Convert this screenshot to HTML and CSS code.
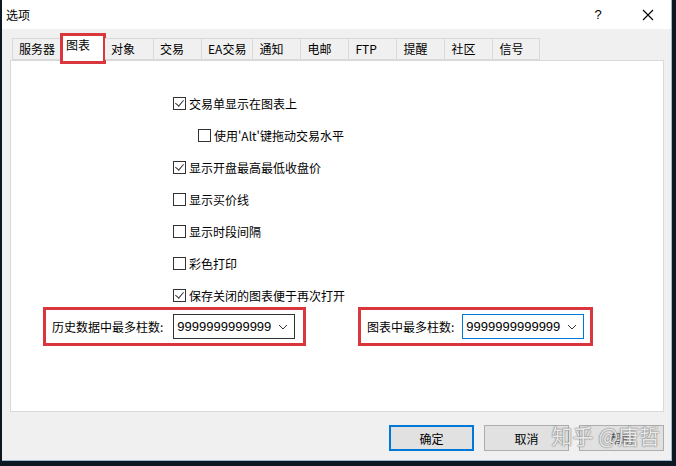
FILE: index.html
```html
<!DOCTYPE html>
<html lang="zh-CN">
<head>
  <meta charset="UTF-8">
  <title>选项</title>
  <link rel="stylesheet" href="styles.css">
</head>
<body>

  <div class="dialog">
    <div class="titlebar">
      <span class="title">选项</span>
      <span class="help">?</span>
      <span class="close">
        <svg width="12" height="12" viewBox="0 0 12 12"><path d="M1 1L11 11M11 1L1 11" stroke="#000" stroke-width="1.1"/></svg>
      </span>
    </div>

    <div class="content">
      <div class="tabs">
        <div class="tab">服务器</div>
        <div class="tab active">图表</div>
        <div class="tab">对象</div>
        <div class="tab">交易</div>
        <div class="tab">EA交易</div>
        <div class="tab">通知</div>
        <div class="tab">电邮</div>
        <div class="tab">FTP</div>
        <div class="tab">提醒</div>
        <div class="tab">社区</div>
        <div class="tab">信号</div>
      </div>

      <div class="panel">
        <div class="options">
          <label class="option"><span class="box checked"></span>交易单显示在图表上</label>
          <label class="option sub"><span class="box"></span>使用'Alt'键拖动交易水平</label>
          <label class="option"><span class="box checked"></span>显示开盘最高最低收盘价</label>
          <label class="option"><span class="box"></span>显示买价线</label>
          <label class="option"><span class="box"></span>显示时段间隔</label>
          <label class="option"><span class="box"></span>彩色打印</label>
          <label class="option"><span class="box checked"></span>保存关闭的图表便于再次打开</label>
        </div>

        <div class="limits">
          <div class="field field-history">
            <span class="field-label">历史数据中最多柱数:</span>
            <div class="combo">
              <span>9999999999999</span>
              <svg width="10" height="6" viewBox="0 0 10 6"><path d="M1 1L5 5L9 1" fill="none" stroke="#333" stroke-width="1"/></svg>
            </div>
          </div>
          <div class="field field-chart">
            <span class="field-label">图表中最多柱数:</span>
            <div class="combo focused">
              <span>9999999999999</span>
              <svg width="10" height="6" viewBox="0 0 10 6"><path d="M1 1L5 5L9 1" fill="none" stroke="#333" stroke-width="1"/></svg>
            </div>
          </div>
        </div>
      </div>

      <div class="buttons">
        <button class="btn default">确定</button>
        <button class="btn">取消</button>
        <button class="btn help-btn">帮助</button>
        <span class="watermark">知乎 @唐哲</span>
      </div>
    </div>
  </div>

</body>
</html>
```

FILE: styles.css
```css
body {
  margin: 0;
  background-color: #0d1822;
  font-family: "Noto Sans CJK SC", "Liberation Sans", sans-serif;
  font-size: 12px;
  color: #000;
  height: 466px;
  overflow: hidden;
}

.dialog {
  margin-left: 2px;
  width: 670px;
  height: 461px;
  background-color: #f0f0f0;
  border-right: 1px solid #9fb8cf;
  border-bottom: 1px solid #9fb8cf;
  box-sizing: border-box;
  display: flex;
  flex-direction: column;
}

.titlebar {
  height: 29px;
  background-color: #fff;
  display: flex;
  align-items: center;
  padding-left: 4px;
  flex-shrink: 0;
}

.title {
  font-size: 12px;
  flex: 1;
}

.help {
  font-family: "Liberation Sans", sans-serif;
  font-size: 13px;
  width: 46px;
  text-align: center;
}

.close {
  width: 46px;
  display: flex;
  justify-content: center;
  padding-left: 4px;
}

.content {
  padding: 9px 7px 0 8px;
  display: flex;
  flex-direction: column;
  position: relative;
}

.tabs {
  display: flex;
  height: 22px;
  padding-left: 2px;
  align-items: flex-end;
  position: relative;
  z-index: 1;
}

.tab {
  min-width: 48px;
  height: 22px;
  box-sizing: border-box;
  padding: 0 6px;
  border: 1px solid #d9d9d9;
  border-right: none;
  background-color: #f0f0f0;
  line-height: 20px;
  white-space: nowrap;
}

.tab:last-child {
  border-right: 1px solid #d9d9d9;
}

.tab.active {
  min-width: 40px;
  width: 40px;
  height: 25px;
  margin: 0 2px -1px 2px;
  background-color: #fff;
  border: none;
  padding-left: 3px;
  line-height: 18px;
  outline: 3px solid #d9363e;
}

.tab.active + .tab {
  border-left: none;
}

.panel {
  height: 352px;
  background-color: #fff;
  border: 1px solid #d9d9d9;
  box-sizing: border-box;
  display: flex;
  flex-direction: column;
}

.options {
  padding: 26px 0 0 162px;
  display: flex;
  flex-direction: column;
}

.option {
  height: 32px;
  display: flex;
  align-items: center;
  gap: 3px;
}

.option.sub {
  padding-left: 25px;
}

.box {
  width: 13px;
  height: 13px;
  border: 1px solid #333;
  box-sizing: border-box;
  background-color: #fff;
  position: relative;
}

.box.checked::after {
  content: "";
  position: absolute;
  left: 3px;
  top: 0;
  width: 4px;
  height: 7px;
  border-right: 1px solid #333;
  border-bottom: 1px solid #333;
  transform: rotate(40deg);
}

.limits {
  display: flex;
  margin-top: -4px;
  padding-left: 32px;
  gap: 52px;
}

.field {
  display: flex;
  align-items: center;
  height: 39px;
  box-sizing: border-box;
  border: 3px solid #d9363e;
  padding-left: 6px;
}

.field-history {
  width: 263px;
  gap: 10px;
}

.field-chart {
  width: 235px;
  gap: 8px;
}

.field-label {
  white-space: nowrap;
}

.combo {
  width: 122px;
  height: 25px;
  box-sizing: border-box;
  border: 1px solid #333;
  background-color: #fff;
  display: flex;
  align-items: center;
  justify-content: space-between;
  padding: 0 6px 0 3px;
  font-family: "Liberation Sans", sans-serif;
  font-size: 13px;
}

.combo.focused {
  border-color: #0078d7;
}

.buttons {
  display: flex;
  justify-content: flex-end;
  gap: 10px;
  padding: 13px 0 0 0;
  position: relative;
}

.btn {
  width: 85px;
  height: 26px;
  font-family: "Noto Sans CJK SC", sans-serif;
  font-size: 12px;
  background-color: #e1e1e1;
  border: 1px solid #adadad;
  padding: 0;
  color: #000;
}

.btn.default {
  border: 2px solid #0078d7;
}

.help-btn {
  color: #555;
}

/* site watermark stamped over the lower right corner */
.watermark {
  position: absolute;
  right: 4px;
  top: 11px;
  font-size: 21px;
  line-height: 24px;
  color: rgba(255, 255, 255, 0.85);
  text-shadow: 0 0 1px #666, 0 0 2px #888;
  pointer-events: none;
}
```
